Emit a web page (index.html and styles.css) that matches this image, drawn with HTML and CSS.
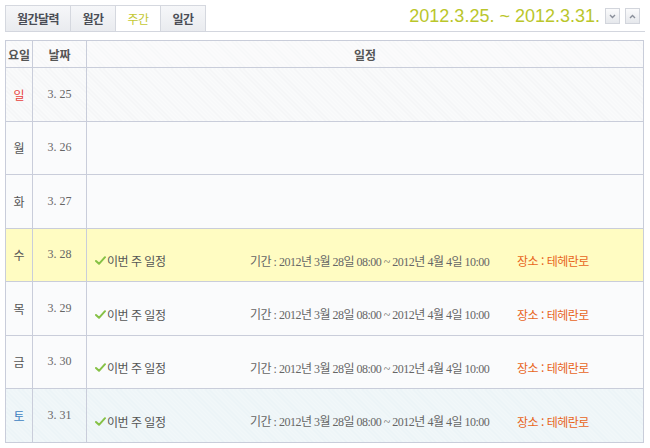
FILE: index.html
```html
<!DOCTYPE html>
<html lang="ko">
<head>
    <meta charset="UTF-8">
    <meta name="viewport" content="width=device-width, initial-scale=1.0">
    <title>주간 일정</title>
    <link rel="stylesheet" href="styles.css">
</head>
<body>

    <div class="calendar">
        <div class="toolbar">
            <ul class="tabs">
                <li class="tab tab-wide">월간달력</li>
                <li class="tab">월간</li>
                <li class="tab active">주간</li>
                <li class="tab">일간</li>
            </ul>
            <div class="range">
                <span class="range-text">2012.3.25. ~ 2012.3.31.</span>
                <button class="nav" title="다음">
                    <svg width="7" height="5" viewBox="0 0 7 5"><path d="M1 1 L3.5 3.5 L6 1" fill="none" stroke="#8a8f9a" stroke-width="1.4"/></svg>
                </button>
                <button class="nav" title="이전">
                    <svg width="7" height="5" viewBox="0 0 7 5"><path d="M1 4 L3.5 1.5 L6 4" fill="none" stroke="#8a8f9a" stroke-width="1.4"/></svg>
                </button>
            </div>
        </div>

        <table class="week">
            <thead>
                <tr>
                    <th class="col-day">요일</th>
                    <th class="col-date">날짜</th>
                    <th>일정</th>
                </tr>
            </thead>
            <tbody>
                <tr class="sun">
                    <td class="day">일</td>
                    <td class="date">3. 25</td>
                    <td class="events"></td>
                </tr>
                <tr>
                    <td class="day">월</td>
                    <td class="date">3. 26</td>
                    <td class="events"></td>
                </tr>
                <tr>
                    <td class="day">화</td>
                    <td class="date">3. 27</td>
                    <td class="events"></td>
                </tr>
                <tr class="today">
                    <td class="day">수</td>
                    <td class="date">3. 28</td>
                    <td class="events">
                        <div class="event">
                            <span class="title"><svg class="check" width="11" height="9" viewBox="0 0 11 9"><path d="M1 5 L4 7.8 L10 1.2" fill="none" stroke="#86c146" stroke-width="2" stroke-linecap="round" stroke-linejoin="round"/></svg>이번 주 일정</span>
                            <span class="period">기간 : 2012년 3월 28일 08:00 ~ 2012년 4월 4일 10:00</span>
                            <span class="place">장소 : 테헤란로</span>
                        </div>
                    </td>
                </tr>
                <tr>
                    <td class="day">목</td>
                    <td class="date">3. 29</td>
                    <td class="events">
                        <div class="event">
                            <span class="title"><svg class="check" width="11" height="9" viewBox="0 0 11 9"><path d="M1 5 L4 7.8 L10 1.2" fill="none" stroke="#86c146" stroke-width="2" stroke-linecap="round" stroke-linejoin="round"/></svg>이번 주 일정</span>
                            <span class="period">기간 : 2012년 3월 28일 08:00 ~ 2012년 4월 4일 10:00</span>
                            <span class="place">장소 : 테헤란로</span>
                        </div>
                    </td>
                </tr>
                <tr>
                    <td class="day">금</td>
                    <td class="date">3. 30</td>
                    <td class="events">
                        <div class="event">
                            <span class="title"><svg class="check" width="11" height="9" viewBox="0 0 11 9"><path d="M1 5 L4 7.8 L10 1.2" fill="none" stroke="#86c146" stroke-width="2" stroke-linecap="round" stroke-linejoin="round"/></svg>이번 주 일정</span>
                            <span class="period">기간 : 2012년 3월 28일 08:00 ~ 2012년 4월 4일 10:00</span>
                            <span class="place">장소 : 테헤란로</span>
                        </div>
                    </td>
                </tr>
                <tr class="sat">
                    <td class="day">토</td>
                    <td class="date">3. 31</td>
                    <td class="events">
                        <div class="event">
                            <span class="title"><svg class="check" width="11" height="9" viewBox="0 0 11 9"><path d="M1 5 L4 7.8 L10 1.2" fill="none" stroke="#86c146" stroke-width="2" stroke-linecap="round" stroke-linejoin="round"/></svg>이번 주 일정</span>
                            <span class="period">기간 : 2012년 3월 28일 08:00 ~ 2012년 4월 4일 10:00</span>
                            <span class="place">장소 : 테헤란로</span>
                        </div>
                    </td>
                </tr>
            </tbody>
        </table>
    </div>

</body>
</html>
```

FILE: styles.css
```css
body {
    margin: 0;
    background: #ffffff;
    font-family: 'Noto Sans CJK KR', sans-serif;
    font-size: 12px;
    color: #555;
}
.calendar {
    width: 640px;
    padding: 5px 0 0 5px;
}
.toolbar {
    display: flex;
    justify-content: space-between;
    align-items: flex-end;
    height: 26px;
    border-bottom: 1px solid #d3d6de;
}
.tabs {
    display: flex;
    margin: 0;
    padding: 0;
    list-style: none;
}
.tab {
    width: 44px;
    height: 25px;
    line-height: 25px;
    text-align: center;
    font-weight: bold;
    font-size: 12px;
    letter-spacing: -0.5px;
    color: #4a4d55;
    background: linear-gradient(#f6f7f9, #e9ebef);
    border: 1px solid #d5d8df;
    border-bottom: none;
    border-right: none;
}
.tab:last-child {
    border-right: 1px solid #d5d8df;
}
.tab-wide {
    width: 64px;
}
.tab.active {
    background: #ffffff;
    color: #c3c832;
    font-weight: normal;
}
.range {
    display: flex;
    align-items: center;
    gap: 5px;
    padding-right: 5px;
    margin-bottom: 5px;
}
.range-text {
    font-family: 'Liberation Sans', 'DejaVu Sans', sans-serif;
    font-size: 18px;
    line-height: 20px;
    color: #bac62b;
}
.nav {
    width: 15px;
    height: 16px;
    padding: 0;
    display: flex;
    align-items: center;
    justify-content: center;
    border: 1px solid #d2d5dc;
    background: linear-gradient(#fbfbfc, #e6e8ec);
    cursor: pointer;
}
.week {
    margin-top: 8px;
    width: 639px;
    border-collapse: collapse;
    border: 1px solid #c9cdda;
    table-layout: fixed;
}
.week th,
.week td {
    border: 1px solid #c9cdda;
    padding: 0;
}
.week th {
    height: 26px;
    font-weight: bold;
    font-size: 12px;
    color: #555;
    background: repeating-linear-gradient(45deg, #f6f7f8 0, #f6f7f8 1px, #fbfbfc 1px, #fbfbfc 3px);
}
.col-day {
    width: 26px;
}
.col-date {
    width: 53px;
}
.week td {
    height: 52.5px;
    background: #fafbfc;
}
.day {
    text-align: center;
    color: #555;
}
.date {
    text-align: center;
    font-family: 'Liberation Serif', 'Noto Sans CJK KR', serif;
    font-size: 12px;
    color: #666;
}
.sun td {
    background: repeating-linear-gradient(45deg, #f3f4f6 0, #f3f4f6 1px, #fafbfb 1px, #fafbfb 3px);
}
.sun .day {
    color: #e8423c;
}
.today td {
    background: #fffcc2;
}
.sat td {
    background: repeating-linear-gradient(45deg, #eaf3f6 0, #eaf3f6 1px, #f1f7f9 1px, #f1f7f9 3px);
}
.sat .day {
    color: #3d7fc1;
}
.events {
    vertical-align: middle;
}
.event {
    display: grid;
    grid-template-columns: 155px 267px auto;
    align-items: center;
    padding: 12px 0 0 8px;
    font-size: 12px;
    letter-spacing: -0.5px;
}
.title {
    display: flex;
    align-items: center;
    color: #555;
}
.check {
    margin-right: 1px;
}
.period {
    font-family: 'Liberation Serif', 'Noto Sans CJK KR', serif;
    color: #666;
}
.place {
    color: #e8651c;
}
```
